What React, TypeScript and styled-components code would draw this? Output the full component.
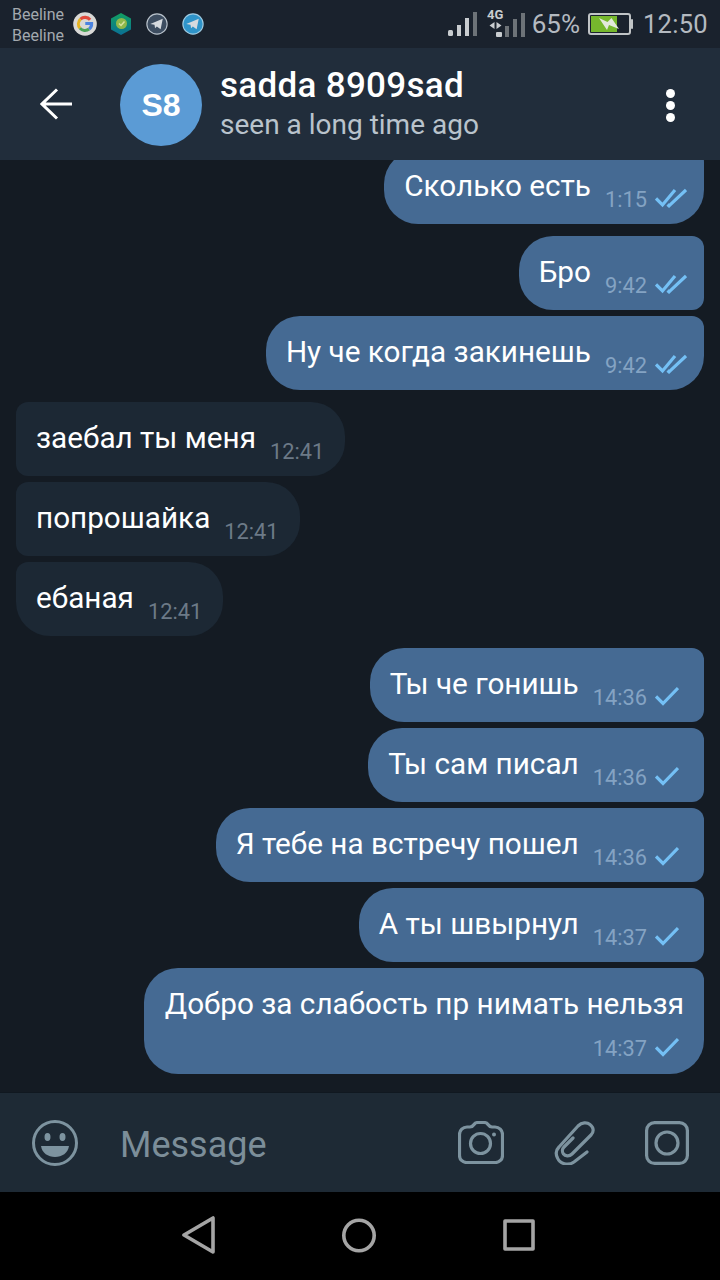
import React from "react";
import styled, { createGlobalStyle } from "styled-components";

const Global = createGlobalStyle`
  html, body { margin: 0; padding: 0; background: #141b23; }
  * { box-sizing: border-box; }
`;

const Page = styled.div`
  width: 720px;
  height: 1280px;
  display: flex;
  flex-direction: column;
  overflow: hidden;
  font-family: Roboto, "Noto Sans", sans-serif;
  background: #141b23;
`;

const StatusBar = styled.div`
  height: 48px;
  flex: none;
  background: #1a222d;
  display: flex;
  align-items: center;
  padding: 0 12px 0 12px;
  color: #b4bac0;
`;
const Carriers = styled.div`
  font-size: 16px;
  line-height: 21.5px;
  width: 61px;
  margin-top: 2px;
  color: #a3a9af;
`;
const NotifIcons = styled.div`
  display: flex;
  align-items: center;
  gap: 14.4px;
  margin-right: auto;
`;
const StatusRight = styled.div`
  display: flex;
  align-items: center;
`;
const Percent = styled.span`
  font-size: 26px;
  line-height: 48px;
  margin: 0 8px 0 6px;
`;
const Clock = styled.span`
  font-size: 25.5px;
  line-height: 48px;
  margin-left: 10px;
  letter-spacing: 0.3px;
`;
const SignalGroup = styled.div`
  margin-left: 9px;
  margin-top: -6px;
  display: flex;
`;

const Header = styled.div`
  height: 112px;
  flex: none;
  background: #212d3b;
  display: flex;
  align-items: center;
  padding: 0 0 0 40px;
  position: relative;
  z-index: 1;
`;
const BackButton = styled.div`
  width: 80px;
  height: 32px;
  flex: none;
  display: flex;
  align-items: center;
`;
const Avatar = styled.div`
  width: 82px;
  height: 82px;
  margin-top: 2px;
  border-radius: 50%;
  background: #5b9bd5;
  color: #fff;
  font-size: 32px;
  font-weight: 700;
  font-family: "Liberation Sans", Arial, sans-serif;
  display: flex;
  align-items: center;
  justify-content: center;
  flex: none;
`;
const TitleBlock = styled.div`
  margin-left: 18px;
  flex: 1;
  display: flex;
  flex-direction: column;
  margin-top: -1px;
`;
const Name = styled.div`
  color: #fff;
  font-size: 35px;
  line-height: 42px;
  font-weight: 500;
  letter-spacing: 0.3px;
  white-space: nowrap;
`;
const Seen = styled.div`
  color: #b9c3cc;
  font-size: 28px;
  line-height: 36px;
  white-space: nowrap;
`;
const Kebab = styled.div`
  display: flex;
  flex-direction: column;
  gap: 3px;
  margin: 2px 45px 0 0;
`;
const Dot = styled.span`
  display: block;
  width: 9px;
  height: 9px;
  border-radius: 50%;
  background: #fff;
`;

const Messages = styled.div`
  flex: 1;
  min-height: 0;
  overflow: hidden;
  display: flex;
  flex-direction: column;
  padding: 0 16px;
`;
const Bubble = styled.div<{ $out?: boolean; $gap: number; $stack?: boolean; $tl: number; $tr: number; $br: number; $bl: number }>`
  align-self: ${(p) => (p.$out ? "flex-end" : "flex-start")};
  margin-top: ${(p) => p.$gap}px;
  display: flex;
  flex-direction: ${(p) => (p.$stack ? "column" : "row")};
  padding: ${(p) =>
    p.$stack ? "18px 20px 12px 21px" : p.$out ? "18px 17px 11px 20px" : "18px 21px 11px 20px"};
  background: ${(p) => (p.$out ? "#456a93" : "#1c2834")};
  border-radius: ${(p) => `${p.$tl}px ${p.$tr}px ${p.$br}px ${p.$bl}px`};
`;
const BubbleText = styled.span<{ $stack?: boolean }>`
  color: #fff;
  font-size: 29.7px;
  line-height: 36px;
  white-space: nowrap;
  margin-bottom: ${(p) => (p.$stack ? 14 : 9)}px;
`;
const Meta = styled.span<{ $out?: boolean; $stack?: boolean }>`
  display: flex;
  align-items: center;
  align-self: flex-end;
  height: 26px;
  margin-left: 14px;
  margin-right: ${(p) => (p.$stack ? -3 : 0)}px;
`;
const Time = styled.span<{ $out?: boolean }>`
  font-size: 21.8px;
  line-height: 26px;
  color: ${(p) => (p.$out ? "#84a3c3" : "#6c7a87")};
`;
const CheckSlot = styled.span`
  width: 40px;
  height: 26px;
  flex: none;
  display: flex;
  align-items: center;
  padding: 0 0 4px 8px;
`;

const InputBar = styled.div`
  height: 100px;
  flex: none;
  background: #1e2a35;
  border-top: 1px solid #101820;
  display: flex;
  align-items: center;
  padding: 0 31px 0 32px;
`;
const Placeholder = styled.div`
  flex: 1;
  margin-left: 42px;
  color: #7c8e99;
  font-size: 36px;
  line-height: 40px;
  margin-top: 4px;
`;
const InputActions = styled.div`
  display: flex;
  align-items: center;
  gap: 50px;
`;

const NavBar = styled.div`
  height: 88px;
  flex: none;
  background: #000;
  display: flex;
  align-items: center;
  justify-content: center;
  gap: 127px;
  padding: 0 3px 2px 0;
`;

const Check = ({ double }: { double?: boolean }) =>
  double ? (
    <svg width="32" height="20" viewBox="0 0 32 20" fill="none" stroke="#74c0f5" strokeWidth="3.200">
      <path d="M1 10.500l6.500 6.500L20 2" />
      <path d="M12.500 16.500l1.500 1.300L31 2" />
    </svg>
  ) : (
    <svg width="24" height="20" viewBox="0 0 24 20" fill="none" stroke="#74c0f5" strokeWidth="3.200">
      <path d="M1 10.500l7 7L23 2" />
    </svg>
  );

const GoogleIcon = () => (
  <svg width="24" height="24" viewBox="0 0 25 25">
    <circle cx="12.500" cy="12.500" r="12.300" fill="#d9d9d6" />
    <g fill="none" strokeWidth="3.200">
      <path d="M17.800 8a7 7 0 0 0-10-.6" stroke="#e04a3c" />
      <path d="M7.800 7.400a7 7 0 0 0-.6 9.400" stroke="#e6b422" />
      <path d="M7.200 16.800a7 7 0 0 0 9.600 1" stroke="#4aa457" />
      <path d="M16.800 17.800a7 7 0 0 0 2.600-5.800h-6.600" stroke="#4a83e0" />
    </g>
  </svg>
);
const HexIcon = () => (
  <svg width="20" height="22" viewBox="0 0 20 22">
    <defs>
      <linearGradient id="hexFill" x1="0" y1="0" x2="0" y2="1">
        <stop offset="0" stopColor="#12a060" />
        <stop offset="1" stopColor="#0a6f96" />
      </linearGradient>
    </defs>
    <path d="M10 0l10 5.500v11L10 22 0 16.500v-11z" fill="url(#hexFill)" />
    <circle cx="10.500" cy="10.500" r="5.500" fill="#8fb84a" />
    <path d="M8 10.500l2 2 3.500-4" fill="none" stroke="#d7e2a0" strokeWidth="1.500" />
  </svg>
);
const TelegramIcon = ({ bg, ring }: { bg: string; ring: string }) => (
  <svg width="22" height="22" viewBox="0 0 23 23">
    <circle cx="11.500" cy="11.500" r="10.600" fill={bg} stroke={ring} strokeWidth="1.200" />
    <path d="M4.500 11.500L17.500 6l-2.200 11-4-3-1.800 2-.6-3.600z" fill="#d6dade" />
  </svg>
);
const SignalA = () => (
  <svg width="31" height="24" viewBox="0 0 31 24" fill="#c9cdd0">
    <rect x="1" y="18" width="5" height="6" rx="1.500" />
    <rect x="10" y="13" width="4" height="11" />
    <rect x="18" y="6" width="4" height="18" />
    <rect x="26" y="0" width="4" height="24" fill="#6d7378" />
  </svg>
);
const SignalB = () => (
  <svg width="39" height="32" viewBox="0 -4 39 32">
    <text x="0" y="9.500" fontSize="13" fontWeight="700" fontFamily="Roboto, sans-serif" fill="#c9cdd0">4G</text>
    <path d="M7.500 13l-5 3.500 5 3.500zM9.500 13l5 3.500-5 3.500z" fill="#c9cdd0" />
    <rect x="9" y="23" width="6" height="5" rx="1" fill="#c9cdd0" />
    <rect x="18" y="17" width="4" height="11" fill="#6d7378" />
    <rect x="26" y="10" width="4" height="18" fill="#6d7378" />
    <rect x="34" y="4" width="4" height="24" fill="#6d7378" />
  </svg>
);
const Battery = () => (
  <svg width="45" height="22" viewBox="0 0 45 22">
    <rect x="1" y="1" width="41" height="20" rx="2" fill="none" stroke="#c0c4c6" strokeWidth="2" />
    <rect x="43" y="6" width="2" height="10" rx="1" fill="#c0c4c6" />
    <rect x="3" y="3" width="26" height="16" fill="#76b82d" />
    <path d="M11 5l8.500 4 4-4 7.500 11-10-4-2 5z" fill="#e3e9dc" />
  </svg>
);
const BackArrow = () => (
  <svg width="32" height="32" viewBox="0 0 32 32" fill="none" stroke="#fff" strokeWidth="3">
    <path d="M2 16h30M17 1.500L2 16l15 14.500" />
  </svg>
);
const SmileIcon = () => (
  <svg width="46" height="46" viewBox="0 0 46 46" fill="none">
    <circle cx="23" cy="23" r="21.500" stroke="#7d939f" strokeWidth="3" />
    <ellipse cx="15.500" cy="17" rx="3" ry="4" fill="#7d939f" />
    <ellipse cx="30.500" cy="17" rx="3" ry="4" fill="#7d939f" />
    <path d="M9 26h28c-1 7-7 11-14 11S10 33 9 26z" fill="#7d939f" />
  </svg>
);
const CameraIcon = () => (
  <svg width="46" height="43" viewBox="0 0 46 43" fill="none" stroke="#7d939f" strokeWidth="3.200">
    <path d="M9 6h3c2 0 3-1 4-2.500 1-1.500 2-2 4-2h6c2 0 3 .5 4 2C31 5 32 6 34 6h3a7.500 7.500 0 0 1 7.500 7.500v21A7 7 0 0 1 37.500 41.500h-29A7 7 0 0 1 1.500 34.500v-21A7.500 7.500 0 0 1 9 6z" />
    <circle cx="22.500" cy="22.500" r="10" />
    <circle cx="36" cy="13.500" r="2" fill="#7d939f" stroke="none" />
  </svg>
);
const ClipIcon = () => (
  <svg width="41" height="44" viewBox="0 0 41 44" fill="none" stroke="#7d939f" strokeWidth="3.200" strokeLinecap="round">
    <path d="M33 31L20 41C14 45 6 43 3.500 37 1.500 33 2 29 5 26L24 5C28 1 33 1 36 3.500 40 6.500 40 11 37 14L18 33C15 36 11 35 9.500 33 8 31 8 28 10 26L19 17" />
  </svg>
);
const InstantIcon = () => (
  <svg width="44" height="44" viewBox="0 0 44 44" fill="none" stroke="#7d939f" strokeWidth="3.200">
    <rect x="1.600" y="1.600" width="40.800" height="40.800" rx="8" />
    <circle cx="22" cy="22" r="11" />
  </svg>
);
const NavBack = () => (
  <svg width="33" height="38" viewBox="0 0 33 38" fill="none" stroke="#a5a5a5" strokeWidth="3.600" strokeLinejoin="round">
    <path d="M31 2v34L2 19z" />
  </svg>
);
const NavHome = () => (
  <svg width="34" height="35" viewBox="0 0 34 35" fill="none" stroke="#a5a5a5" strokeWidth="3.600">
    <circle cx="17" cy="17.500" r="15.200" />
  </svg>
);
const NavRecent = () => (
  <svg width="32" height="32" viewBox="0 0 32 32" fill="none" stroke="#a5a5a5" strokeWidth="3.600" strokeLinejoin="round">
    <rect x="2" y="2" width="28" height="28" />
  </svg>
);

type Msg = {
  text: string;
  time: string;
  out?: boolean;
  check?: "one" | "two";
  gap: number;
  r: [number, number, number, number];
  stack?: boolean;
};

const L = 34;
const S = 12;
const messages: Msg[] = [
  { text: "Сколько есть", time: "1:15", out: true, check: "two", gap: -10, r: [L, S, L, L] },
  { text: "Бро", time: "9:42", out: true, check: "two", gap: 12, r: [L, S, S, L] },
  { text: "Ну че когда закинешь", time: "9:42", out: true, check: "two", gap: 6, r: [L, S, L, L] },
  { text: "заебал ты меня", time: "12:41", gap: 12, r: [S, L, L, S] },
  { text: "попрошайка", time: "12:41", gap: 6, r: [S, L, L, S] },
  { text: "ебаная", time: "12:41", gap: 6, r: [S, L, L, L] },
  { text: "Ты че гонишь", time: "14:36", out: true, check: "one", gap: 12, r: [L, S, S, L] },
  { text: "Ты сам писал", time: "14:36", out: true, check: "one", gap: 6, r: [L, S, S, L] },
  { text: "Я тебе на встречу пошел", time: "14:36", out: true, check: "one", gap: 6, r: [L, S, S, L] },
  { text: "А ты швырнул", time: "14:37", out: true, check: "one", gap: 6, r: [L, S, S, L] },
  { text: "Добро за слабость пр нимать нельзя", time: "14:37", out: true, check: "one", gap: 6, r: [L, S, L, L], stack: true },
];

export default function App() {
  return (
    <Page>
      <Global />
      <StatusBar>
        <Carriers>
          Beeline
          <br />
          Beeline
        </Carriers>
        <NotifIcons>
          <GoogleIcon />
          <HexIcon />
          <TelegramIcon bg="#3d4d60" ring="#b9c3cc" />
          <TelegramIcon bg="#2f94c9" ring="#9fcbe2" />
        </NotifIcons>
        <StatusRight>
          <SignalA />
          <SignalGroup>
            <SignalB />
          </SignalGroup>
          <Percent>65%</Percent>
          <Battery />
          <Clock>12:50</Clock>
        </StatusRight>
      </StatusBar>
      <Header>
        <BackButton>
          <BackArrow />
        </BackButton>
        <Avatar>S8</Avatar>
        <TitleBlock>
          <Name>sadda 8909sad</Name>
          <Seen>seen a long time ago</Seen>
        </TitleBlock>
        <Kebab>
          <Dot />
          <Dot />
          <Dot />
        </Kebab>
      </Header>
      <Messages>
        {messages.map((m, i) => (
          <Bubble key={i} $out={m.out} $gap={m.gap} $stack={m.stack} $tl={m.r[0]} $tr={m.r[1]} $br={m.r[2]} $bl={m.r[3]}>
            <BubbleText $stack={m.stack}>{m.text}</BubbleText>
            <Meta $out={m.out} $stack={m.stack}>
              <Time $out={m.out}>{m.time}</Time>
              {m.check && (
                <CheckSlot>
                  <Check double={m.check === "two"} />
                </CheckSlot>
              )}
            </Meta>
          </Bubble>
        ))}
      </Messages>
      <InputBar>
        <SmileIcon />
        <Placeholder>Message</Placeholder>
        <InputActions>
          <CameraIcon />
          <ClipIcon />
          <InstantIcon />
        </InputActions>
      </InputBar>
      <NavBar>
        <NavBack />
        <NavHome />
        <NavRecent />
      </NavBar>
    </Page>
  );
}
